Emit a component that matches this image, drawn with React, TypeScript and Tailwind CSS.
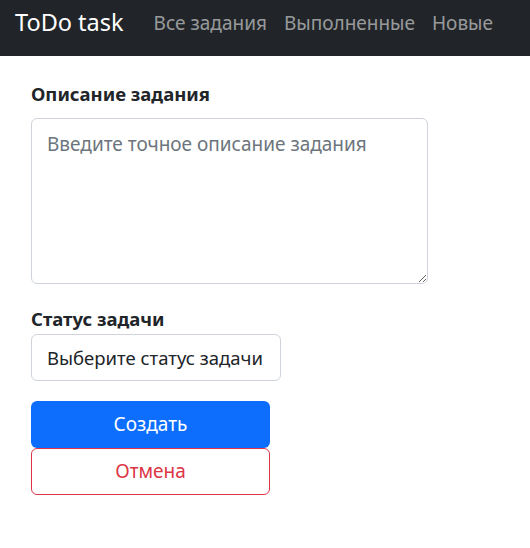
export default function App() {
  return (
    <div className="min-h-[548px] bg-white font-['Noto_Sans',sans-serif] text-[#212529]">
      <nav className="flex h-14 items-center bg-[#212529] px-[15px] pb-[10px]">
        <span className="mr-[30px] text-[23.5px] text-white">ToDo task</span>
        <div className="flex gap-[17px] text-[19px] text-[#ffffff8c]">
          <span>Все задания</span>
          <span>Выполненные</span>
          <span>Новые</span>
        </div>
      </nav>
      <form className="flex flex-col pl-[31px] pt-[24px]">
        <label className="mb-[10px] text-[18.5px] font-bold leading-[28px]">Описание задания</label>
        <textarea
          className="h-[166px] w-[397px] resize-y rounded-[6px] border border-[#ced4da] px-[15px] py-[11px] text-[19px] placeholder:text-[#6c757d]"
          placeholder="Введите точное описание задания"
        />
        <label className="mb-[1px] mt-[21px] text-[18.5px] font-bold leading-[28px]">Статус задачи</label>
        <div className="flex h-[47px] w-[250px] items-center whitespace-nowrap rounded-[6px] border border-[#ced4da] px-[15px] text-[18.5px]">
          Выберите статус задачи
        </div>
        <button
          type="button"
          className="mt-[20px] h-[47px] w-[239px] rounded-[6px] bg-[#0d6efd] text-[19px] text-white"
        >
          Создать
        </button>
        <button
          type="button"
          className="h-[47px] w-[239px] rounded-[6px] border border-[#dc3545] text-[19px] text-[#dc3545]"
        >
          Отмена
        </button>
      </form>
    </div>
  );
}
